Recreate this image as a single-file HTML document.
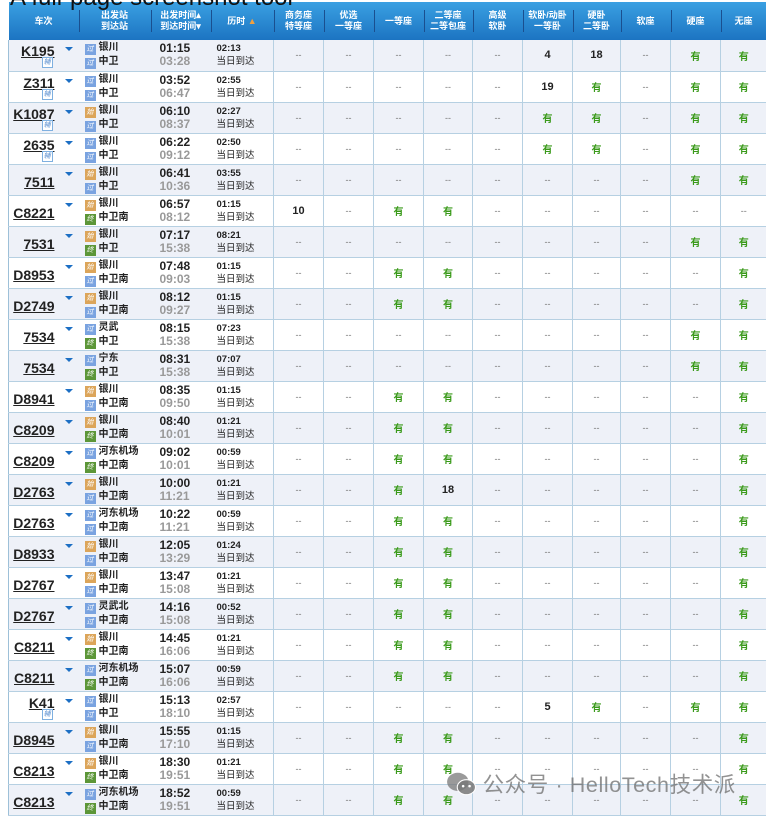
<!DOCTYPE html>
<html><head><meta charset="utf-8"><style>
*{margin:0;padding:0;box-sizing:border-box}
body{width:766px;height:815px;overflow:hidden;background:#fff;font-family:"Liberation Sans","Noto Sans CJK SC",sans-serif;position:relative}
.title{position:absolute;left:10px;top:-16px;font-size:24px;color:#111;white-space:nowrap;z-index:2}
table{position:absolute;left:8px;top:2px;border-collapse:collapse;table-layout:fixed;width:758px}
th{height:38px;background:linear-gradient(#3aa0e2,#1c74c2);color:#fff;font-size:9px;font-weight:bold;line-height:11px;position:relative;text-align:center}
th+th:after{content:"";position:absolute;left:0;top:8px;height:22px;border-left:1px solid #1a4f8f}
td{height:31px;border-bottom:1px solid #b6d0e2;font-size:10px;vertical-align:middle;position:relative}
td.s{border-left:1px solid #b6d0e2;text-align:center;color:#777;font-size:9px}
td.s b{color:#222;font-size:11px}
td.s u{text-decoration:none;color:#3a9a1a;font-weight:bold;font-size:10px}
tr.a td{background:#eef1f8}
td.t{border-left:1px solid #9dc0d8}
.n{position:absolute;right:24px;top:9px;font-weight:bold;font-size:14px;text-decoration:underline;color:#222}
.f .n{top:3px}
.fu{position:absolute;right:26px;top:17px;width:11px;height:11px;border:1px solid #7fb0e0;color:#5a8fd0;font-size:7px;line-height:9px;text-align:center;background:#fff}
.ar{position:absolute;left:56px;top:7px;width:0;height:0;border-left:4px solid transparent;border-right:4px solid transparent;border-top:4px solid #1c6fc4}
.st{font-size:10px;font-weight:bold;color:#222;line-height:13px;padding-left:6px}
.ic{display:inline-block;width:11px;height:11px;color:#fff;font-size:7px;line-height:11px;text-align:center;vertical-align:-1px;margin-right:3px;font-weight:normal}
.g{background:#7aa3e0}.o{background:#dca55a}.e{background:#5c9638}
.tm{font-weight:bold;font-size:12px;line-height:13px;padding-left:9px;color:#222}
.tm span{color:#999}
.du{font-size:9.5px;line-height:13px;padding-left:6px;color:#222}
.wm{position:absolute;left:446px;top:768px;font-size:21.5px;letter-spacing:0.6px;color:rgba(110,110,110,.75);white-space:nowrap}
</style></head><body>
<div class="title">A full-page screenshot tool</div>
<table>
<colgroup><col style="width:70px"><col style="width:72px"><col style="width:60px"><col style="width:63px"><col style="width:50px"><col style="width:50px"><col style="width:50px"><col style="width:49px"><col style="width:50px"><col style="width:50px"><col style="width:48px"><col style="width:50px"><col style="width:50px"><col style="width:46px"></colgroup>
<tr><th>车次</th><th>出发站<br>到达站</th><th>出发时间▴<br>到达时间▾</th><th>历时 <span style="color:#f0a040">▲</span></th><th>商务座<br>特等座</th><th>优选<br>一等座</th><th>一等座</th><th>二等座<br>二等包座</th><th>高级<br>软卧</th><th>软卧/动卧<br>一等卧</th><th>硬卧<br>二等卧</th><th>软座</th><th>硬座</th><th>无座</th></tr>
<tr class="a"><td class="t f"><span class="n">K195</span><i class="fu">辅</i><i class="ar"></i></td><td><div class="st"><i class="ic g">过</i>银川<br><i class="ic g">过</i>中卫</div></td><td><div class="tm">01:15<br><span>03:28</span></div></td><td><div class="du"><b>02:13</b><br>当日到达</div></td><td class="s">--</td><td class="s">--</td><td class="s">--</td><td class="s">--</td><td class="s">--</td><td class="s"><b>4</b></td><td class="s"><b>18</b></td><td class="s">--</td><td class="s"><u>有</u></td><td class="s"><u>有</u></td></tr>
<tr><td class="t f"><span class="n">Z311</span><i class="fu">辅</i><i class="ar"></i></td><td><div class="st"><i class="ic g">过</i>银川<br><i class="ic g">过</i>中卫</div></td><td><div class="tm">03:52<br><span>06:47</span></div></td><td><div class="du"><b>02:55</b><br>当日到达</div></td><td class="s">--</td><td class="s">--</td><td class="s">--</td><td class="s">--</td><td class="s">--</td><td class="s"><b>19</b></td><td class="s"><u>有</u></td><td class="s">--</td><td class="s"><u>有</u></td><td class="s"><u>有</u></td></tr>
<tr class="a"><td class="t f"><span class="n">K1087</span><i class="fu">辅</i><i class="ar"></i></td><td><div class="st"><i class="ic o">始</i>银川<br><i class="ic g">过</i>中卫</div></td><td><div class="tm">06:10<br><span>08:37</span></div></td><td><div class="du"><b>02:27</b><br>当日到达</div></td><td class="s">--</td><td class="s">--</td><td class="s">--</td><td class="s">--</td><td class="s">--</td><td class="s"><u>有</u></td><td class="s"><u>有</u></td><td class="s">--</td><td class="s"><u>有</u></td><td class="s"><u>有</u></td></tr>
<tr><td class="t f"><span class="n">2635</span><i class="fu">辅</i><i class="ar"></i></td><td><div class="st"><i class="ic g">过</i>银川<br><i class="ic g">过</i>中卫</div></td><td><div class="tm">06:22<br><span>09:12</span></div></td><td><div class="du"><b>02:50</b><br>当日到达</div></td><td class="s">--</td><td class="s">--</td><td class="s">--</td><td class="s">--</td><td class="s">--</td><td class="s"><u>有</u></td><td class="s"><u>有</u></td><td class="s">--</td><td class="s"><u>有</u></td><td class="s"><u>有</u></td></tr>
<tr class="a"><td class="t"><span class="n">7511</span><i class="ar"></i></td><td><div class="st"><i class="ic o">始</i>银川<br><i class="ic g">过</i>中卫</div></td><td><div class="tm">06:41<br><span>10:36</span></div></td><td><div class="du"><b>03:55</b><br>当日到达</div></td><td class="s">--</td><td class="s">--</td><td class="s">--</td><td class="s">--</td><td class="s">--</td><td class="s">--</td><td class="s">--</td><td class="s">--</td><td class="s"><u>有</u></td><td class="s"><u>有</u></td></tr>
<tr><td class="t"><span class="n">C8221</span><i class="ar"></i></td><td><div class="st"><i class="ic o">始</i>银川<br><i class="ic e">终</i>中卫南</div></td><td><div class="tm">06:57<br><span>08:12</span></div></td><td><div class="du"><b>01:15</b><br>当日到达</div></td><td class="s"><b>10</b></td><td class="s">--</td><td class="s"><u>有</u></td><td class="s"><u>有</u></td><td class="s">--</td><td class="s">--</td><td class="s">--</td><td class="s">--</td><td class="s">--</td><td class="s">--</td></tr>
<tr class="a"><td class="t"><span class="n">7531</span><i class="ar"></i></td><td><div class="st"><i class="ic o">始</i>银川<br><i class="ic e">终</i>中卫</div></td><td><div class="tm">07:17<br><span>15:38</span></div></td><td><div class="du"><b>08:21</b><br>当日到达</div></td><td class="s">--</td><td class="s">--</td><td class="s">--</td><td class="s">--</td><td class="s">--</td><td class="s">--</td><td class="s">--</td><td class="s">--</td><td class="s"><u>有</u></td><td class="s"><u>有</u></td></tr>
<tr><td class="t"><span class="n">D8953</span><i class="ar"></i></td><td><div class="st"><i class="ic o">始</i>银川<br><i class="ic g">过</i>中卫南</div></td><td><div class="tm">07:48<br><span>09:03</span></div></td><td><div class="du"><b>01:15</b><br>当日到达</div></td><td class="s">--</td><td class="s">--</td><td class="s"><u>有</u></td><td class="s"><u>有</u></td><td class="s">--</td><td class="s">--</td><td class="s">--</td><td class="s">--</td><td class="s">--</td><td class="s"><u>有</u></td></tr>
<tr class="a"><td class="t"><span class="n">D2749</span><i class="ar"></i></td><td><div class="st"><i class="ic o">始</i>银川<br><i class="ic g">过</i>中卫南</div></td><td><div class="tm">08:12<br><span>09:27</span></div></td><td><div class="du"><b>01:15</b><br>当日到达</div></td><td class="s">--</td><td class="s">--</td><td class="s"><u>有</u></td><td class="s"><u>有</u></td><td class="s">--</td><td class="s">--</td><td class="s">--</td><td class="s">--</td><td class="s">--</td><td class="s"><u>有</u></td></tr>
<tr><td class="t"><span class="n">7534</span><i class="ar"></i></td><td><div class="st"><i class="ic g">过</i>灵武<br><i class="ic e">终</i>中卫</div></td><td><div class="tm">08:15<br><span>15:38</span></div></td><td><div class="du"><b>07:23</b><br>当日到达</div></td><td class="s">--</td><td class="s">--</td><td class="s">--</td><td class="s">--</td><td class="s">--</td><td class="s">--</td><td class="s">--</td><td class="s">--</td><td class="s"><u>有</u></td><td class="s"><u>有</u></td></tr>
<tr class="a"><td class="t"><span class="n">7534</span><i class="ar"></i></td><td><div class="st"><i class="ic g">过</i>宁东<br><i class="ic e">终</i>中卫</div></td><td><div class="tm">08:31<br><span>15:38</span></div></td><td><div class="du"><b>07:07</b><br>当日到达</div></td><td class="s">--</td><td class="s">--</td><td class="s">--</td><td class="s">--</td><td class="s">--</td><td class="s">--</td><td class="s">--</td><td class="s">--</td><td class="s"><u>有</u></td><td class="s"><u>有</u></td></tr>
<tr><td class="t"><span class="n">D8941</span><i class="ar"></i></td><td><div class="st"><i class="ic o">始</i>银川<br><i class="ic g">过</i>中卫南</div></td><td><div class="tm">08:35<br><span>09:50</span></div></td><td><div class="du"><b>01:15</b><br>当日到达</div></td><td class="s">--</td><td class="s">--</td><td class="s"><u>有</u></td><td class="s"><u>有</u></td><td class="s">--</td><td class="s">--</td><td class="s">--</td><td class="s">--</td><td class="s">--</td><td class="s"><u>有</u></td></tr>
<tr class="a"><td class="t"><span class="n">C8209</span><i class="ar"></i></td><td><div class="st"><i class="ic o">始</i>银川<br><i class="ic e">终</i>中卫南</div></td><td><div class="tm">08:40<br><span>10:01</span></div></td><td><div class="du"><b>01:21</b><br>当日到达</div></td><td class="s">--</td><td class="s">--</td><td class="s"><u>有</u></td><td class="s"><u>有</u></td><td class="s">--</td><td class="s">--</td><td class="s">--</td><td class="s">--</td><td class="s">--</td><td class="s"><u>有</u></td></tr>
<tr><td class="t"><span class="n">C8209</span><i class="ar"></i></td><td><div class="st"><i class="ic g">过</i>河东机场<br><i class="ic e">终</i>中卫南</div></td><td><div class="tm">09:02<br><span>10:01</span></div></td><td><div class="du"><b>00:59</b><br>当日到达</div></td><td class="s">--</td><td class="s">--</td><td class="s"><u>有</u></td><td class="s"><u>有</u></td><td class="s">--</td><td class="s">--</td><td class="s">--</td><td class="s">--</td><td class="s">--</td><td class="s"><u>有</u></td></tr>
<tr class="a"><td class="t"><span class="n">D2763</span><i class="ar"></i></td><td><div class="st"><i class="ic o">始</i>银川<br><i class="ic g">过</i>中卫南</div></td><td><div class="tm">10:00<br><span>11:21</span></div></td><td><div class="du"><b>01:21</b><br>当日到达</div></td><td class="s">--</td><td class="s">--</td><td class="s"><u>有</u></td><td class="s"><b>18</b></td><td class="s">--</td><td class="s">--</td><td class="s">--</td><td class="s">--</td><td class="s">--</td><td class="s"><u>有</u></td></tr>
<tr><td class="t"><span class="n">D2763</span><i class="ar"></i></td><td><div class="st"><i class="ic g">过</i>河东机场<br><i class="ic g">过</i>中卫南</div></td><td><div class="tm">10:22<br><span>11:21</span></div></td><td><div class="du"><b>00:59</b><br>当日到达</div></td><td class="s">--</td><td class="s">--</td><td class="s"><u>有</u></td><td class="s"><u>有</u></td><td class="s">--</td><td class="s">--</td><td class="s">--</td><td class="s">--</td><td class="s">--</td><td class="s"><u>有</u></td></tr>
<tr class="a"><td class="t"><span class="n">D8933</span><i class="ar"></i></td><td><div class="st"><i class="ic o">始</i>银川<br><i class="ic g">过</i>中卫南</div></td><td><div class="tm">12:05<br><span>13:29</span></div></td><td><div class="du"><b>01:24</b><br>当日到达</div></td><td class="s">--</td><td class="s">--</td><td class="s"><u>有</u></td><td class="s"><u>有</u></td><td class="s">--</td><td class="s">--</td><td class="s">--</td><td class="s">--</td><td class="s">--</td><td class="s"><u>有</u></td></tr>
<tr><td class="t"><span class="n">D2767</span><i class="ar"></i></td><td><div class="st"><i class="ic o">始</i>银川<br><i class="ic g">过</i>中卫南</div></td><td><div class="tm">13:47<br><span>15:08</span></div></td><td><div class="du"><b>01:21</b><br>当日到达</div></td><td class="s">--</td><td class="s">--</td><td class="s"><u>有</u></td><td class="s"><u>有</u></td><td class="s">--</td><td class="s">--</td><td class="s">--</td><td class="s">--</td><td class="s">--</td><td class="s"><u>有</u></td></tr>
<tr class="a"><td class="t"><span class="n">D2767</span><i class="ar"></i></td><td><div class="st"><i class="ic g">过</i>灵武北<br><i class="ic g">过</i>中卫南</div></td><td><div class="tm">14:16<br><span>15:08</span></div></td><td><div class="du"><b>00:52</b><br>当日到达</div></td><td class="s">--</td><td class="s">--</td><td class="s"><u>有</u></td><td class="s"><u>有</u></td><td class="s">--</td><td class="s">--</td><td class="s">--</td><td class="s">--</td><td class="s">--</td><td class="s"><u>有</u></td></tr>
<tr><td class="t"><span class="n">C8211</span><i class="ar"></i></td><td><div class="st"><i class="ic o">始</i>银川<br><i class="ic e">终</i>中卫南</div></td><td><div class="tm">14:45<br><span>16:06</span></div></td><td><div class="du"><b>01:21</b><br>当日到达</div></td><td class="s">--</td><td class="s">--</td><td class="s"><u>有</u></td><td class="s"><u>有</u></td><td class="s">--</td><td class="s">--</td><td class="s">--</td><td class="s">--</td><td class="s">--</td><td class="s"><u>有</u></td></tr>
<tr class="a"><td class="t"><span class="n">C8211</span><i class="ar"></i></td><td><div class="st"><i class="ic g">过</i>河东机场<br><i class="ic e">终</i>中卫南</div></td><td><div class="tm">15:07<br><span>16:06</span></div></td><td><div class="du"><b>00:59</b><br>当日到达</div></td><td class="s">--</td><td class="s">--</td><td class="s"><u>有</u></td><td class="s"><u>有</u></td><td class="s">--</td><td class="s">--</td><td class="s">--</td><td class="s">--</td><td class="s">--</td><td class="s"><u>有</u></td></tr>
<tr><td class="t f"><span class="n">K41</span><i class="fu">辅</i><i class="ar"></i></td><td><div class="st"><i class="ic g">过</i>银川<br><i class="ic g">过</i>中卫</div></td><td><div class="tm">15:13<br><span>18:10</span></div></td><td><div class="du"><b>02:57</b><br>当日到达</div></td><td class="s">--</td><td class="s">--</td><td class="s">--</td><td class="s">--</td><td class="s">--</td><td class="s"><b>5</b></td><td class="s"><u>有</u></td><td class="s">--</td><td class="s"><u>有</u></td><td class="s"><u>有</u></td></tr>
<tr class="a"><td class="t"><span class="n">D8945</span><i class="ar"></i></td><td><div class="st"><i class="ic o">始</i>银川<br><i class="ic g">过</i>中卫南</div></td><td><div class="tm">15:55<br><span>17:10</span></div></td><td><div class="du"><b>01:15</b><br>当日到达</div></td><td class="s">--</td><td class="s">--</td><td class="s"><u>有</u></td><td class="s"><u>有</u></td><td class="s">--</td><td class="s">--</td><td class="s">--</td><td class="s">--</td><td class="s">--</td><td class="s"><u>有</u></td></tr>
<tr><td class="t"><span class="n">C8213</span><i class="ar"></i></td><td><div class="st"><i class="ic o">始</i>银川<br><i class="ic e">终</i>中卫南</div></td><td><div class="tm">18:30<br><span>19:51</span></div></td><td><div class="du"><b>01:21</b><br>当日到达</div></td><td class="s">--</td><td class="s">--</td><td class="s"><u>有</u></td><td class="s"><u>有</u></td><td class="s">--</td><td class="s">--</td><td class="s">--</td><td class="s">--</td><td class="s">--</td><td class="s"><u>有</u></td></tr>
<tr class="a"><td class="t"><span class="n">C8213</span><i class="ar"></i></td><td><div class="st"><i class="ic g">过</i>河东机场<br><i class="ic e">终</i>中卫南</div></td><td><div class="tm">18:52<br><span>19:51</span></div></td><td><div class="du"><b>00:59</b><br>当日到达</div></td><td class="s">--</td><td class="s">--</td><td class="s"><u>有</u></td><td class="s"><u>有</u></td><td class="s">--</td><td class="s">--</td><td class="s">--</td><td class="s">--</td><td class="s">--</td><td class="s"><u>有</u></td></tr>
</table>
<div class="wm"><svg width="30" height="26" viewBox="0 0 28 24" style="vertical-align:-5px"><ellipse cx="11" cy="10" rx="10" ry="8.5" fill="rgba(120,120,120,.75)"/><ellipse cx="19" cy="15" rx="8.5" ry="7" fill="rgba(120,120,120,.85)" stroke="#fff" stroke-width="1"/><circle cx="16" cy="14" r="1.2" fill="#fff"/><circle cx="22" cy="14" r="1.2" fill="#fff"/></svg> 公众号 · HelloTech技术派</div>
</body></html>
